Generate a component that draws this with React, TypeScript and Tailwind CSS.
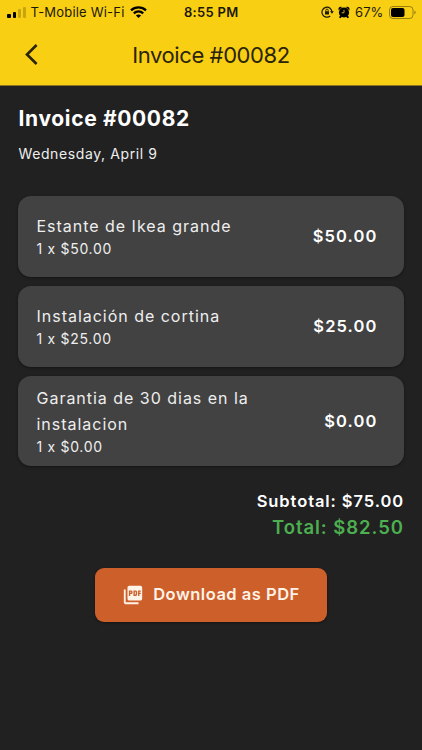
import { MdPictureAsPdf } from "react-icons/md";

const items = [
  { name: "Estante de Ikea grande", qty: "1 x $50.00", total: "$50.00" },
  { name: "Instalación de cortina", qty: "1 x $25.00", total: "$25.00" },
  { name: "Garantia de 30 dias en la instalacion", qty: "1 x $0.00", total: "$0.00" },
];

function StatusBar() {
  return (
    <div className="grid grid-cols-[177px_1fr_auto] items-center h-6 pl-[7px] pr-[6px] text-[#1b1808]">
      <div className="flex items-center">
        <div className="flex items-end gap-[2px] h-[11px]">
          <span className="w-[3.5px] h-[4px] rounded-[1px] bg-black" />
          <span className="w-[3px] h-[6px] rounded-[1px] bg-black" />
          <span className="w-[3px] h-[9px] rounded-[1px] bg-black/20" />
          <span className="w-[3px] h-[11px] rounded-[1px] bg-black/20" />
        </div>
        <span className="ml-[5px] w-[94px] pt-px text-[13px] tracking-[0.2px] whitespace-nowrap">T-Mobile Wi-Fi</span>
        <svg className="ml-[5px]" width="17" height="12" viewBox="0 0 17 12" fill="none" stroke="#000" strokeWidth="2.3">
          <path d="M1 4.3C5.2.4 11.8.4 16 4.3" />
          <path d="M3.8 7.3C6.5 4.9 10.5 4.9 13.2 7.3" />
          <path d="M8.5 12 5.9 9.5c1.4-1.3 3.8-1.3 5.2 0z" fill="#000" stroke="none" />
        </svg>
      </div>
      <span className="pt-px text-[13px] font-semibold tracking-[0.3px] whitespace-nowrap">8:55 PM</span>
      <div className="flex items-center">
        <svg width="13" height="12" viewBox="0 0 13 12" fill="none" stroke="#1b1808" strokeWidth="1.2">
          <path d="M9.2 10A5 5 0 1 1 11 6" />
          <path d="M9 5.3h3.8L11 7.7z" fill="#1b1808" stroke="none" />
          <path d="M4.8 5.5V4.3a1.2 1.2 0 0 1 2.4 0v1.2" strokeWidth=".9" />
          <rect x="4" y="5.2" width="4" height="3.3" rx=".5" fill="#1b1808" stroke="none" />
        </svg>
        <svg className="ml-[4px]" width="12" height="13" viewBox="0 0 12 13">
          <circle cx="6" cy="6.5" r="5.1" />
          <path d="M.7 4.4C-.2 1.5 2 .1 4 1.1zM11.3 4.4C12.2 1.5 10 .1 8 1.1zM.9 11.3l1.6-2 1.6 1.3-1.6 1.7zM11.1 11.3l-1.6-2-1.6 1.3 1.6 1.7z" />
          <path d="M6 3.8v3H3.6" fill="none" stroke="#f9cf13" strokeWidth=".8" />
        </svg>
        <span className="ml-[5px] w-[29px] pt-px text-[13px] tracking-[0.1px]">67%</span>
        <svg className="ml-[5px]" width="27" height="13" viewBox="0 0 27 13">
          <rect x=".5" y=".5" width="23.5" height="12" rx="3.4" fill="none" stroke="#000" strokeOpacity=".38" />
          <rect x="2" y="2" width="13.5" height="9" rx="2" />
          <path d="M25.3 4.6q1.4.6 1.4 1.9t-1.4 1.9z" fillOpacity=".38" />
        </svg>
      </div>
    </div>
  );
}

export default function App() {
  return (
    <div className="w-[422px] h-[750px] overflow-hidden bg-[#212121] text-white font-['Inter','Liberation_Sans',sans-serif]">
      <header className="h-[86px] bg-[#f9cf13] border-b border-[#8a751c]">
        <StatusBar />
        <div className="grid grid-cols-[62px_1fr_62px] items-center h-[62px] text-[#2a240b]">
          <button aria-label="Back" className="pl-[24px]">
            <svg width="15" height="22" viewBox="0 0 15 22" fill="none" stroke="#2a240b" strokeWidth="2.6">
              <path d="M12.6 1 3 10.5l9.6 9.5" />
            </svg>
          </button>
          <h1 className="text-center text-[22px] tracking-[-0.4px] whitespace-nowrap">Invoice #00082</h1>
        </div>
      </header>

      <main className="px-[18px] pt-[19px]">
        <h2 className="pl-[0.5px] text-[21px] leading-[28px] font-bold tracking-[0.65px]">Invoice #00082</h2>
        <p className="mt-[11px] pl-[0.5px] text-[14px] leading-[20px] tracking-[0.6px] text-[#eeeeee]">Wednesday, April 9</p>

        <ul className="mt-[32px] flex flex-col gap-[9px]">
          {items.map((item) => (
            <li
              key={item.name}
              className="flex items-center justify-between min-h-[81px] pl-[18.5px] pr-[26.5px] py-[8.5px] rounded-[13px] bg-[#424242] shadow-[0_1px_3px_rgba(0,0,0,0.4)]"
            >
              <div className="w-[230px]">
                <p className="text-[16px] leading-[26px] tracking-[0.98px] text-[#eeeeee]">{item.name}</p>
                <p className="text-[14px] leading-[20px] pb-px tracking-[0.7px] text-[#eeeeee]">{item.qty}</p>
              </div>
              <span className="text-[16.5px] font-semibold tracking-[1.1px]">{item.total}</span>
            </li>
          ))}
        </ul>

        <div className="mt-[22px] text-right font-semibold">
          <p className="text-[16.5px] leading-[26px] tracking-[0.92px]">Subtotal: $75.00</p>
          <p className="text-[18.5px] leading-[26px] tracking-[0.95px] text-[#4caf50]">Total: $82.50</p>
        </div>

        <button className="mt-[28px] mx-auto flex items-center justify-center w-[232px] h-[54px] pb-px rounded-[9px] bg-[#cd5f2b] text-[#fff3e8] shadow-[0_1px_3px_rgba(0,0,0,0.4)]">
          <MdPictureAsPdf size={22} />
          <span className="ml-[9px] text-[16.5px] font-semibold tracking-[0.5px] whitespace-nowrap">Download as PDF</span>
        </button>
      </main>
    </div>
  );
}
